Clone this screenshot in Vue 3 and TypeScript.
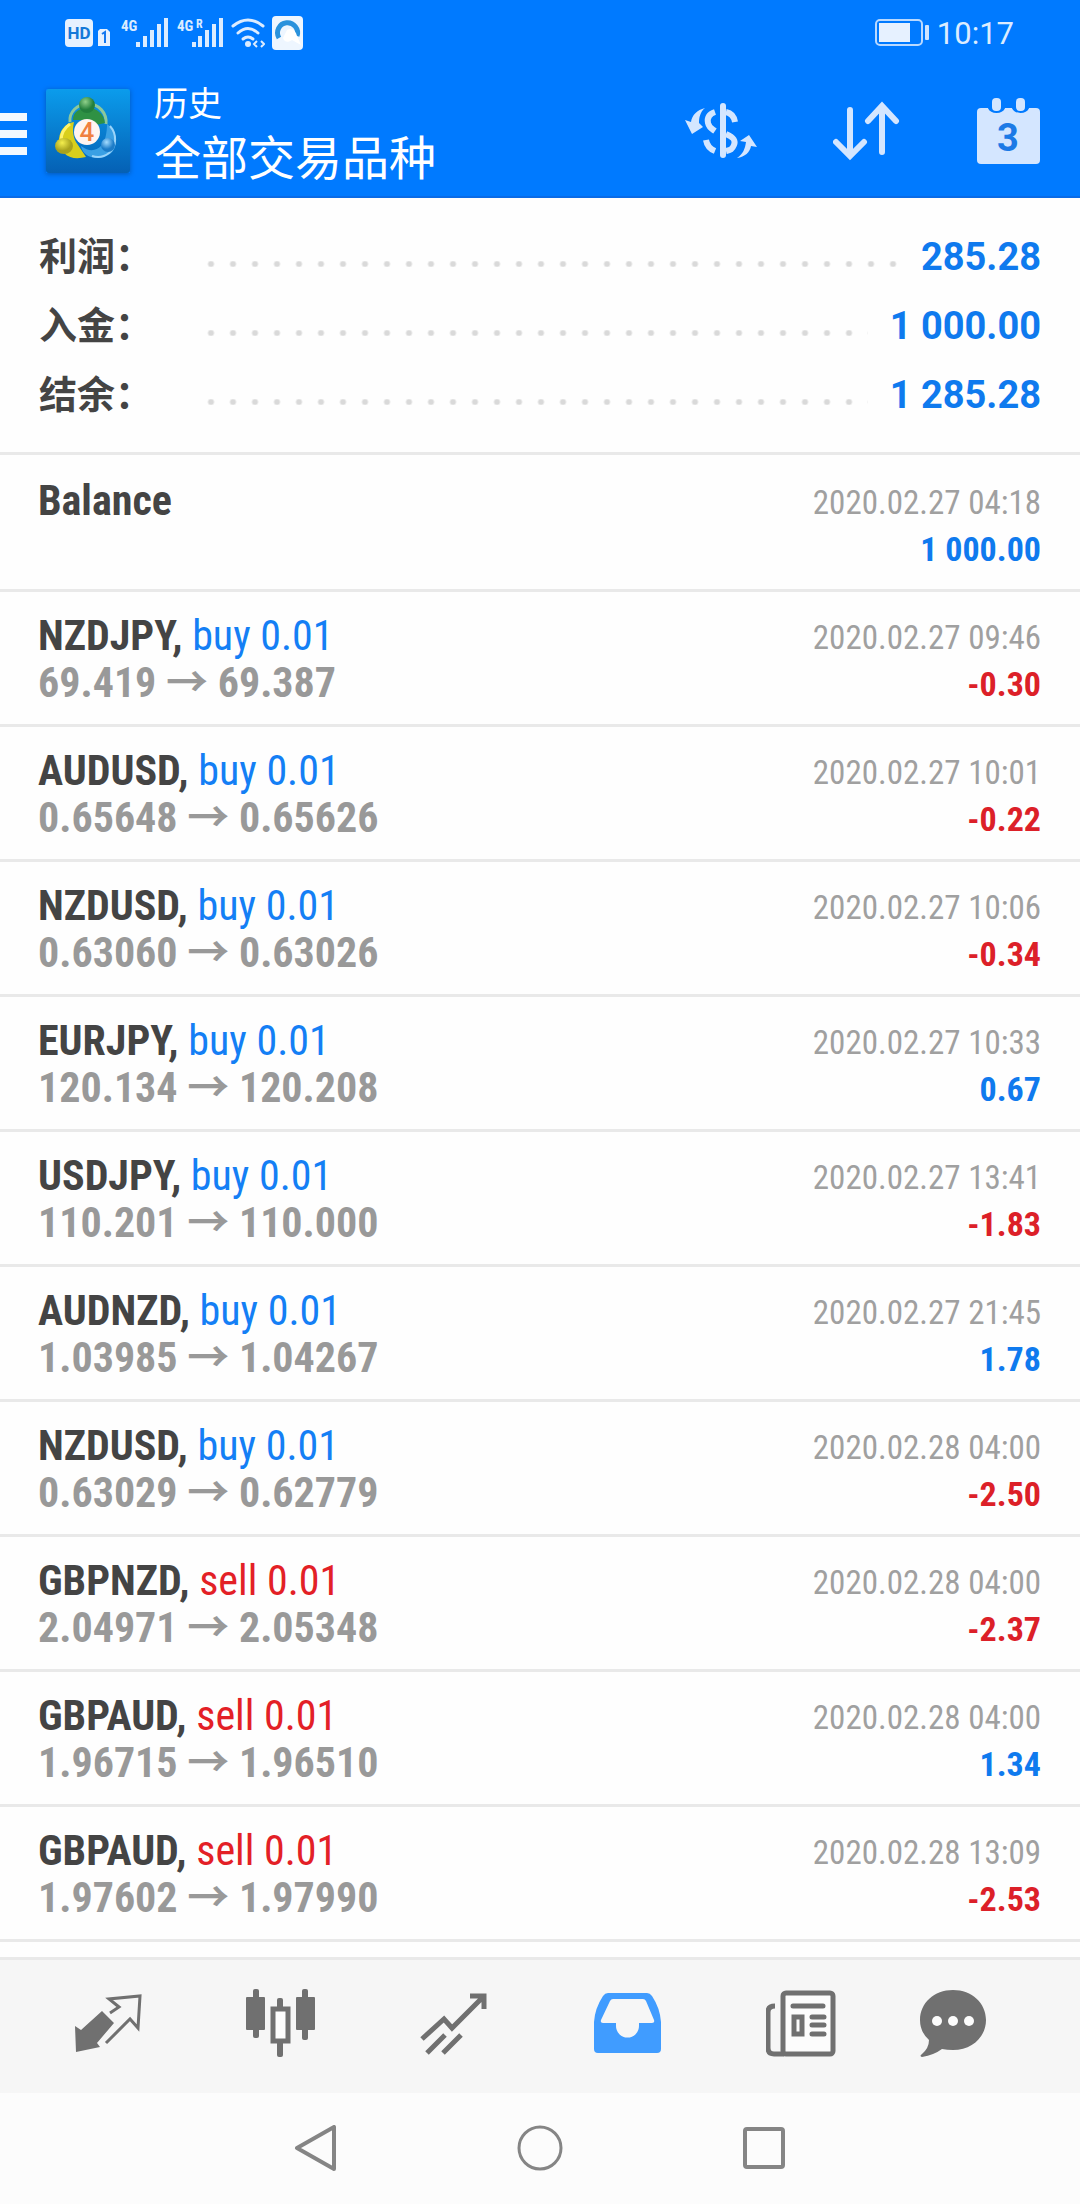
<script setup lang="ts">
interface SummaryLine {
  label: string
  value: string
}

interface Deal {
  symbol: string
  side?: 'buy' | 'sell'
  volume?: string
  open?: string
  close?: string
  time: string
  profit: string
}

const summary: SummaryLine[] = [
  { label: '利润：', value: '285.28' },
  { label: '入金：', value: '1 000.00' },
  { label: '结余：', value: '1 285.28' },
]

const deals: Deal[] = [
  { symbol: 'Balance', time: '2020.02.27 04:18', profit: '1 000.00' },
  { symbol: 'NZDJPY', side: 'buy', volume: '0.01', open: '69.419', close: '69.387', time: '2020.02.27 09:46', profit: '-0.30' },
  { symbol: 'AUDUSD', side: 'buy', volume: '0.01', open: '0.65648', close: '0.65626', time: '2020.02.27 10:01', profit: '-0.22' },
  { symbol: 'NZDUSD', side: 'buy', volume: '0.01', open: '0.63060', close: '0.63026', time: '2020.02.27 10:06', profit: '-0.34' },
  { symbol: 'EURJPY', side: 'buy', volume: '0.01', open: '120.134', close: '120.208', time: '2020.02.27 10:33', profit: '0.67' },
  { symbol: 'USDJPY', side: 'buy', volume: '0.01', open: '110.201', close: '110.000', time: '2020.02.27 13:41', profit: '-1.83' },
  { symbol: 'AUDNZD', side: 'buy', volume: '0.01', open: '1.03985', close: '1.04267', time: '2020.02.27 21:45', profit: '1.78' },
  { symbol: 'NZDUSD', side: 'buy', volume: '0.01', open: '0.63029', close: '0.62779', time: '2020.02.28 04:00', profit: '-2.50' },
  { symbol: 'GBPNZD', side: 'sell', volume: '0.01', open: '2.04971', close: '2.05348', time: '2020.02.28 04:00', profit: '-2.37' },
  { symbol: 'GBPAUD', side: 'sell', volume: '0.01', open: '1.96715', close: '1.96510', time: '2020.02.28 04:00', profit: '1.34' },
  { symbol: 'GBPAUD', side: 'sell', volume: '0.01', open: '1.97602', close: '1.97990', time: '2020.02.28 13:09', profit: '-2.53' },
]

const isLoss = (deal: Deal): boolean => deal.profit.startsWith('-')
</script>

<template>
  <div class="screen">
    <header class="top">
      <div class="status">
        <svg class="hd" width="46" height="30" viewBox="0 0 46 30">
          <rect x="0" y="1" width="28" height="28" rx="4" fill="#e6f1ff" />
          <text x="14" y="21" text-anchor="middle" class="hd-text">HD</text>
          <path d="M35 11h7l3 3v14H33V13z" fill="#e6f1ff" />
          <path d="M37 16l3-2v11" fill="none" stroke="#1478f0" stroke-width="2" />
        </svg>
        <svg class="signal" width="48" height="30" viewBox="0 0 48 30">
          <text x="0" y="13" class="net">4G</text>
          <g fill="#dcecff">
            <rect x="15" y="24" width="4" height="5" /><rect x="22" y="18" width="4" height="11" />
            <rect x="29" y="12" width="4" height="17" /><rect x="36" y="6" width="4" height="23" />
            <rect x="43" y="0" width="4" height="29" />
          </g>
        </svg>
        <svg class="signal" width="48" height="30" viewBox="0 0 48 30">
          <text x="0" y="13" class="net">4G</text>
          <text x="19" y="10" class="net roam">R</text>
          <g fill="#dcecff">
            <rect x="15" y="24" width="4" height="5" /><rect x="21" y="18" width="4" height="11" />
            <rect x="28" y="12" width="4" height="17" /><rect x="35" y="6" width="4" height="23" />
            <rect x="42" y="0" width="4" height="29" />
          </g>
        </svg>
        <svg class="wifi" width="34" height="30" viewBox="0 0 34 30">
          <g fill="none" stroke="#dcecff" stroke-width="3" stroke-linecap="round">
            <path d="M2 8Q17-4 32 8" /><path d="M7 15Q17 6 27 15" /><path d="M12 21Q17 17 22 21" />
          </g>
          <circle cx="17" cy="26" r="3" fill="#dcecff" />
          <path d="M26 23l-3 3 3 3M30 23l3 3-3 3" fill="none" stroke="#dcecff" stroke-width="2" />
        </svg>
        <svg class="app" width="31" height="34" viewBox="0 0 31 34">
          <rect width="31" height="34" rx="4" fill="#eef6ff" />
          <path d="M7 22A10 10 0 1 1 25 20" fill="none" stroke="#2a92dc" stroke-width="5" />
          <path d="M15 14c5-3 9 1 10 6l4 9-9-5c-4 3-8 2-9-2z" fill="#fff" />
        </svg>
        <svg class="battery" width="54" height="28" viewBox="0 0 54 28">
          <rect x="1" y="1" width="46" height="25" rx="4" fill="none" stroke="#b9d9ff" stroke-width="2" />
          <rect x="4" y="4" width="31" height="19" fill="#e6f1ff" />
          <rect x="50" y="6" width="4" height="15" rx="1" fill="#cfe4ff" />
        </svg>
        <time class="clock">10:17</time>
      </div>

      <div class="appbar">
        <button type="button" class="menu" aria-label="菜单"><i></i><i></i><i></i></button>
        <svg class="logo" width="84" height="84" viewBox="0 0 84 84">
          <defs>
            <linearGradient id="tile" x1="0" y1="0" x2="0" y2="1">
              <stop offset="0" stop-color="#0b9cec" /><stop offset="1" stop-color="#0560b4" />
            </linearGradient>
            <radialGradient id="green" cx=".4" cy=".3"><stop offset="0" stop-color="#8fd08a" /><stop offset="1" stop-color="#237f3c" /></radialGradient>
            <radialGradient id="yellow" cx=".4" cy=".3"><stop offset="0" stop-color="#f4ee4e" /><stop offset="1" stop-color="#a8a21e" /></radialGradient>
            <radialGradient id="blue" cx=".4" cy=".3"><stop offset="0" stop-color="#a4dcff" /><stop offset="1" stop-color="#1c7cc8" /></radialGradient>
          </defs>
          <rect width="84" height="84" rx="3" fill="url(#tile)" />
          <path d="M24 33C23 23 31 15 42 15s19 9 18 20" fill="none" stroke="#8cc89a" stroke-width="3" />
          <path d="M27 31c0-8 6-12 15-12s16 6 17 15l-9 2-15-5z" fill="#2f9144" />
          <path d="M28 33c-9 1-16 10-15 21l5 10c6 6 14 6 22 4l-8-12c-5-6-6-15-4-23z" fill="#d9cf1c" />
          <path d="M24 35c-6 4-9 10-9 17" fill="none" stroke="#fff36a" stroke-width="3" />
          <path d="M61 35c7 5 11 14 8 23-3 9-14 13-24 10-6-2-9-6-10-11 8 6 15 5 20 0 4-4 6-13 6-22z" fill="#3aa0e4" />
          <path d="M64 37c7 8 7 20-1 27-5 4-11 5-17 3" fill="none" stroke="#9ad4fa" stroke-width="2" />
          <circle cx="41" cy="16" r="8" fill="url(#green)" />
          <ellipse cx="18" cy="57" rx="9" ry="8" fill="url(#yellow)" />
          <circle cx="62" cy="56" r="7" fill="url(#blue)" />
          <circle cx="41" cy="43" r="13" fill="#fff4f0" />
          <text x="41" y="52" text-anchor="middle" class="logo-num">4</text>
        </svg>
        <div class="titles">
          <span class="section">历史</span>
          <h1>全部交易品种</h1>
        </div>
        <div class="actions">
          <button type="button" aria-label="交易品种">
            <svg width="72" height="66" viewBox="0 -5 72 66" fill="none" stroke="#d4e6ff" stroke-width="6">
              <path d="M38 3V52" stroke-linecap="round" />
              <path d="M30 9C24 11 22 15 23 20S27 26 30 28M41 9C46 10 49 13 50 19M41 31C48 34 51 37 49 42S45 47 41 48M21 37C22 43 25 46 30 48" />
              <path d="M20 5C15 9 14 15 14 20l4 4L7 31 0 17l6 2c1-7 6-12 14-14zM52 55c6-4 8-9 9-16l-6-1 9-6 8 12-6-1c-1 6-6 11-14 12z" fill="#d4e6ff" stroke="none" />
            </svg>
          </button>
          <button type="button" aria-label="排序">
            <svg width="68" height="66" viewBox="0 -5 68 66" fill="none" stroke="#d4e6ff" stroke-width="6" stroke-linecap="round">
              <path d="M17 7V52M3 39L17 53 31 39M49 49V6M35 18L49 3 63 18" />
            </svg>
          </button>
          <button type="button" aria-label="日期">
            <svg width="63" height="66" viewBox="0 0 63 66">
              <rect y="10" width="63" height="56" rx="4" fill="#d4e6ff" />
              <path d="M12 10a8 6 0 0 0 15 0zM36 10a8 6 0 0 0 15 0z" fill="#007aff" stroke="#007aff" stroke-width="2" />
              <rect x="15" width="9" height="13" rx="4" fill="#d4e6ff" /><rect x="39" width="9" height="13" rx="4" fill="#d4e6ff" />
              <text x="31" y="53" text-anchor="middle" class="cal-num">3</text>
            </svg>
          </button>
        </div>
      </div>
    </header>

    <main>
      <dl class="summary">
        <div v-for="line in summary" :key="line.label" class="line">
          <dt>{{ line.label }}</dt>
          <dd class="leader" aria-hidden="true"></dd>
          <dd class="sum">{{ line.value }}</dd>
        </div>
      </dl>

      <ul class="deals">
        <li v-for="(deal, i) in deals" :key="i" class="deal">
          <div class="left">
            <div class="name">
              <template v-if="deal.side"><b>{{ deal.symbol }},</b> <span :class="deal.side">{{ deal.side }} {{ deal.volume }}</span></template>
              <b v-else>{{ deal.symbol }}</b>
            </div>
            <div v-if="deal.open" class="prices">{{ deal.open }} → {{ deal.close }}</div>
          </div>
          <div class="right">
            <time class="date">{{ deal.time }}</time>
            <span class="profit" :class="{ loss: isLoss(deal) }">{{ deal.profit }}</span>
          </div>
        </li>
      </ul>
    </main>

    <nav class="tabs">
      <button type="button" aria-label="行情">
        <svg width="68" height="70" viewBox="-1 -5 68 70">
          <path d="M0 32l6 4 21-19 12 12-17 20 3 4-24 5z" fill="#707070" />
          <path d="M35 19l9-6-10-8 31-3-2 32-8-9-24 24" fill="none" stroke="#707070" stroke-width="3" />
        </svg>
      </button>
      <button type="button" aria-label="图表">
        <svg width="70" height="70" viewBox="0 0 70 70">
          <g fill="#707070">
            <rect x="7" width="6" height="49" rx="2" /><rect y="8" width="19" height="33" rx="1" />
            <rect x="56" width="6" height="51" rx="2" /><rect x="50" y="8" width="19" height="33" rx="1" />
            <rect x="31" y="9" width="6" height="12" rx="2" /><rect x="31" y="52" width="6" height="16" rx="2" />
          </g>
          <rect x="27" y="20" width="15" height="32" fill="#fcfcfc" stroke="#707070" stroke-width="5" />
        </svg>
      </button>
      <button type="button" aria-label="交易">
        <svg width="68" height="70" viewBox="0 -3 68 70" fill="none" stroke="#707070" stroke-width="5">
          <path d="M2 47L24 27 32 36 63 5M50 4H64V17M7 61L25 43M23 61L41 43" />
        </svg>
      </button>
      <button type="button" aria-label="历史" aria-current="page">
        <svg width="68" height="70" viewBox="0 -3 68 70">
          <path fill-rule="evenodd" d="M14 1H53q3 0 5 3Q66 16 67 30V57q0 4-4 4H4q-4 0-4-4V30Q1 16 9 4q2-3 5-3zM19 7q-2 0-3 2L7 28q-1 3 2 3H22v3a11 11 0 0 0 23 0V31H58q3 0 2-3L52 9q-1-2-3-2z" fill="#409cff" />
        </svg>
      </button>
      <button type="button" aria-label="新闻">
        <svg width="70" height="70" viewBox="0 0 70 70" fill="none" stroke="#707070" stroke-width="5">
          <rect x="17" y="4" width="50" height="61" rx="3" fill="#fcfcfc" />
          <path d="M9 17Q2 17 2 23V59q0 6 6 6H18" />
          <path d="M27 17H57M46 28H58M46 36H58M46 45H58" stroke-linecap="round" />
          <rect x="28" y="28" width="8" height="17" />
        </svg>
      </button>
      <button type="button" aria-label="消息">
        <svg width="68" height="70" viewBox="0 0 68 70">
          <path d="M33 1C52 1 66 14 66 31S52 61 33 61q-6 0-11-1-8 6-20 8-3-1 0-3 7-6 7-14Q0 43 0 31C0 14 14 1 33 1z" fill="#707070" />
          <g fill="#fcfcfc"><circle cx="17" cy="32" r="5" /><circle cx="33" cy="32" r="5" /><circle cx="49" cy="32" r="5" /></g>
        </svg>
      </button>
    </nav>

    <nav class="system">
      <button type="button" aria-label="返回">
        <svg width="46" height="46" viewBox="0 0 46 46" fill="none" stroke="#858585" stroke-width="4" stroke-linejoin="round"><path d="M41 2V44L4 23z" /></svg>
      </button>
      <button type="button" aria-label="主页">
        <svg width="46" height="46" viewBox="0 0 46 46" fill="none" stroke="#858585" stroke-width="3"><circle cx="23" cy="23" r="21" /></svg>
      </button>
      <button type="button" aria-label="最近">
        <svg width="46" height="46" viewBox="0 0 46 46" fill="none" stroke="#858585" stroke-width="4"><rect x="4" y="4" width="38" height="38" rx="2" /></svg>
      </button>
    </nav>
  </div>
</template>

<style>
body {
  margin: 0;
  background: #fdfdfd;
}
</style>

<style scoped>
.screen {
  display: flex;
  flex-direction: column;
  min-height: 100vh;
  background: #fefefe;
  color: #444;
  font-family: Roboto, "Noto Sans CJK SC", sans-serif;
}

button {
  display: flex;
  align-items: center;
  justify-content: center;
  margin: 0;
  padding: 0;
  border: 0;
  background: none;
}

svg {
  display: block;
  flex: none;
}

.top {
  background: #007aff;
  border-bottom: 2px solid #0a6be6;
  color: #fff;
}

.status {
  display: flex;
  align-items: center;
  height: 66px;
  padding: 0 66px 0 65px;
}

.signal {
  margin-left: 10px;
}

.signal + .signal {
  margin-left: 8px;
}

.wifi {
  margin-left: 6px;
}

.app {
  margin-left: 7px;
}

.battery {
  margin-left: auto;
}

.hd-text {
  font: 700 17px Roboto, sans-serif;
  fill: #1478d8;
}

.net {
  font: 700 15px "Roboto Condensed", Roboto, sans-serif;
  fill: #dcecff;
}

.net.roam {
  font-size: 12px;
}

.clock {
  margin-left: 8px;
  padding-top: 2px;
  color: #dcecff;
  font-size: 31px;
  line-height: 40px;
}

.appbar {
  display: flex;
  align-items: center;
  height: 130px;
  padding-right: 40px;
}

.menu {
  flex-direction: column;
  gap: 9px;
  width: 27px;
  padding-top: 5px;
}

.menu i {
  width: 100%;
  height: 8px;
  background: #f2f8ff;
}

.logo {
  margin-left: 19px;
  box-shadow: 0 1px 5px #0458b4;
}

.logo-num {
  font: 500 26px Roboto, sans-serif;
  fill: #f08040;
}

.titles {
  margin-left: 24px;
  padding-top: 9px;
}

.section {
  display: block;
  font-size: 34px;
  line-height: 46px;
}

h1 {
  margin: 0;
  font-size: 47px;
  font-weight: 400;
  line-height: 64px;
}

.actions {
  display: flex;
  gap: 76px;
  margin-left: auto;
}

.cal-num {
  font: 700 38px Roboto, sans-serif;
  fill: #1c7ae6;
}

.summary {
  margin: 0;
  padding: 24px 39px 23px;
  border-bottom: 3px solid #e9e9e9;
}

.line {
  display: flex;
  align-items: center;
  height: 69px;
}

dt {
  width: 161px;
  font-size: 38px;
  font-weight: 700;
  line-height: 48px;
}

dd {
  margin: 0;
}

.leader {
  flex: 1;
  height: 6px;
  margin-right: 22px;
  padding-top: 14px;
  background: radial-gradient(circle, #d9d9d9 2px, transparent 4px) 0 100% / 22px 6px repeat-x;
}

.sum {
  color: #0f7aee;
  font-size: 38px;
  font-weight: 700;
  line-height: 48px;
}

.deals {
  margin: 0;
  padding: 0;
  list-style: none;
  font-family: "Roboto Condensed", Roboto, "Noto Sans CJK SC", sans-serif;
}

.deal {
  display: flex;
  justify-content: space-between;
  height: 132px;
  padding: 0 39px 0 38px;
  border-bottom: 3px solid #e9e9e9;
}

.deal:first-child {
  padding-top: 2px;
}

.left {
  padding-top: 20px;
}

.name,
.prices {
  font-size: 42px;
  line-height: 47px;
  white-space: nowrap;
}

.name b {
  font-weight: 700;
}

.prices {
  color: #999;
  font-weight: 700;
}

.buy {
  color: #147ff5;
}

.sell {
  color: #e32026;
}

.right {
  display: flex;
  flex-direction: column;
  align-items: flex-end;
  padding-top: 22px;
  font-size: 34px;
  line-height: 47px;
}

.date {
  color: #a0a0a0;
  font-size: 33px;
}

.profit {
  color: #0f7aee;
  font-weight: 700;
}

.profit.loss {
  color: #dc2028;
}

.tabs {
  display: grid;
  grid-template-columns: repeat(5, 173fr) 133fr;
  height: 133px;
  margin-top: auto;
  padding: 0 59px 0 21px;
  border-top: 3px solid #e9e9e9;
  background: #f6f6f6;
}

.tabs button {
  padding-bottom: 6px;
}

.system {
  display: flex;
  justify-content: center;
  height: 111px;
  background: #fcfcfc;
}

.system button {
  width: 224px;
  padding-bottom: 2px;
}
</style>
